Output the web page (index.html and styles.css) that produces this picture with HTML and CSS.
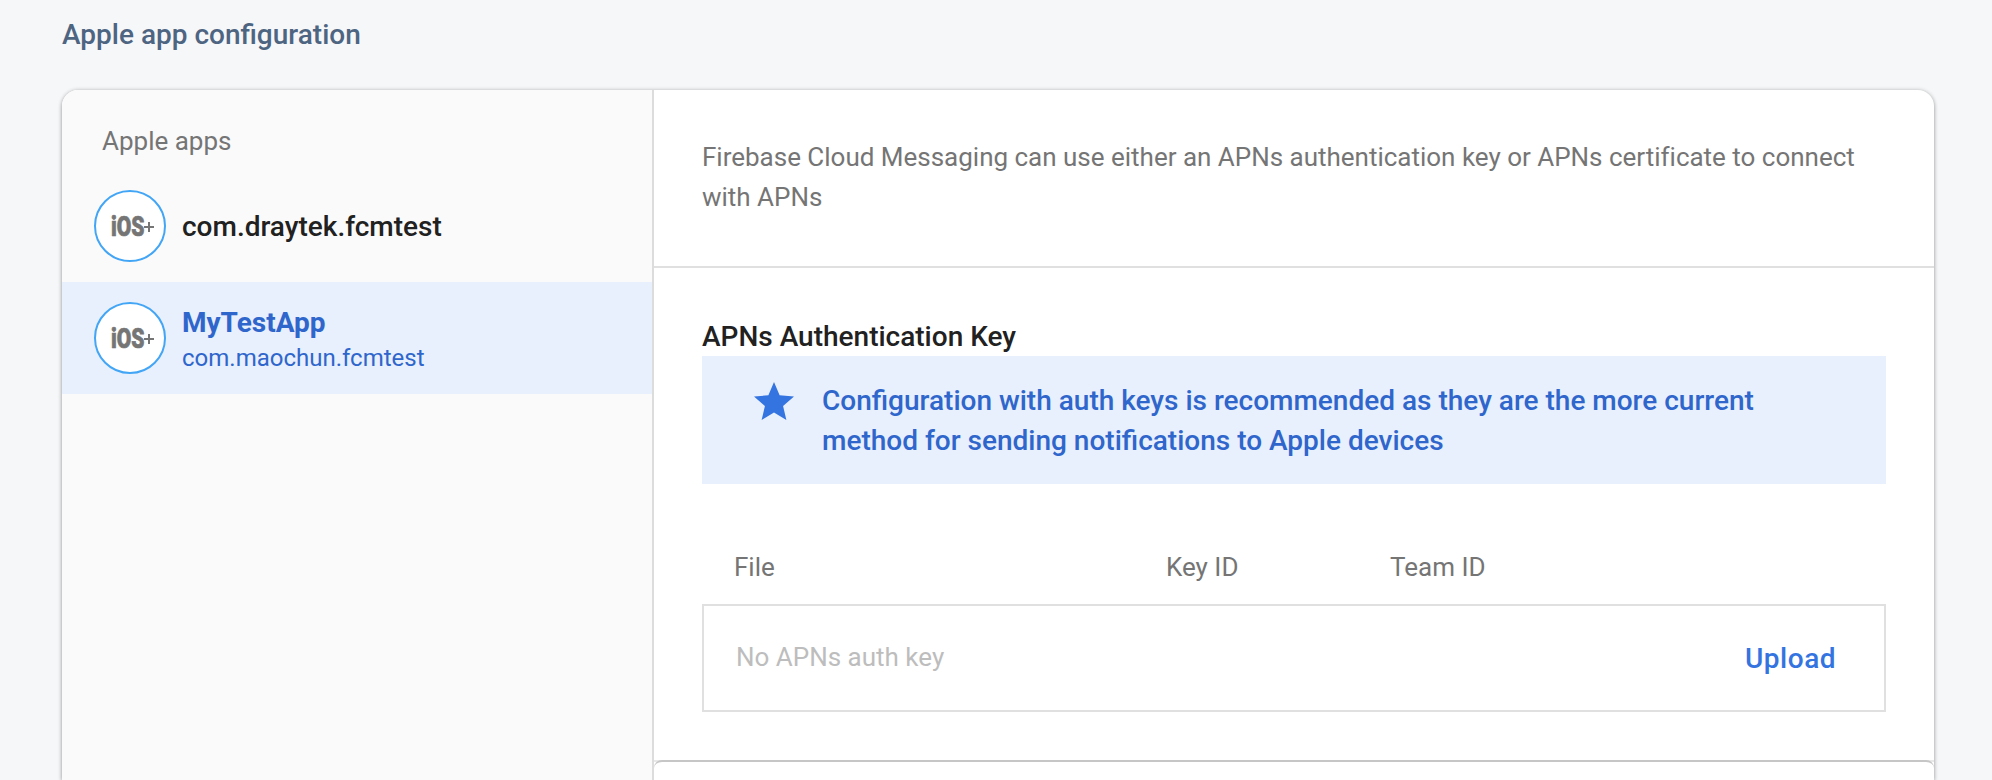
FILE: index.html
```html
<!DOCTYPE html>
<html lang="en">
<head>
<meta charset="utf-8">
<title>Apple app configuration</title>
<link rel="stylesheet" href="styles.css">
</head>
<body>
<main class="page">
  <h2 class="page-title">Apple app configuration</h2>
  <section class="card">
    <nav class="sidebar">
      <div class="sidebar-label">Apple apps</div>
      <div class="app">
        <span class="app-icon">
          <svg width="68" height="68" viewBox="0 0 68 68">
            <text class="ios-letters" x="15" y="44" textLength="33.5" lengthAdjust="spacingAndGlyphs">iOS</text>
            <path class="ios-plus" d="M48 35h10M53 30v10"/>
          </svg>
        </span>
        <div class="app-text"><div class="app-name">com.draytek.fcmtest</div></div>
      </div>
      <div class="app app-selected">
        <span class="app-icon">
          <svg width="68" height="68" viewBox="0 0 68 68">
            <text class="ios-letters" x="15" y="44" textLength="33.5" lengthAdjust="spacingAndGlyphs">iOS</text>
            <path class="ios-plus" d="M48 35h10M53 30v10"/>
          </svg>
        </span>
        <div class="app-text">
          <div class="app-name">MyTestApp</div>
          <div class="app-id">com.maochun.fcmtest</div>
        </div>
      </div>
    </nav>
    <div class="content">
      <p class="intro">Firebase Cloud Messaging can use either an APNs authentication key or APNs certificate to connect with APNs</p>
      <div class="auth">
        <h3 class="auth-title">APNs Authentication Key</h3>
        <div class="notice">
          <svg class="star" width="48" height="48" viewBox="0 0 24 24"><path d="M12 17.27L18.18 21l-1.64-7.03L22 9.24l-7.19-.61L12 2 9.19 8.63 2 9.24l5.46 4.73L5.82 21z"/></svg>
          <p class="notice-text">Configuration with auth keys is recommended as they are the more current method for sending notifications to Apple devices</p>
        </div>
        <div class="table-head"><span>File</span><span>Key ID</span><span>Team ID</span></div>
        <div class="table-row"><span class="empty">No APNs auth key</span><a class="upload">Upload</a></div>
      </div>
      <div class="next-card"></div>
    </div>
  </section>
</main>
</body>
</html>
```

FILE: styles.css
```css
* { box-sizing: border-box; }
body {
  margin: 0;
  background: #f6f7f9;
  font-family: Roboto, "Liberation Sans", sans-serif;
  font-size: 26px;
  line-height: 40px;
  color: #757575;
}
h2, h3, p { margin: 0; }
.page { height: 780px; padding: 15px 58px 0 62px; overflow: hidden; }
.page-title {
  font-size: 28px;
  font-weight: 500;
  line-height: 40px;
  color: #4e6582;
}
.card {
  display: flex;
  height: 690px;
  margin-top: 35px;
  border-radius: 16px 16px 0 0;
  overflow: hidden;
  background: #fff;
  box-shadow: 0 2px 4px rgba(0, 0, 0, .26), 0 0 4px rgba(0, 0, 0, .18);
}
.sidebar {
  width: 592px;
  flex: none;
  background: #fafafa;
  border-right: 2px solid #dcdcdc;
}
.sidebar-label { padding: 31px 40px 9px; }
.app {
  display: flex;
  align-items: center;
  height: 112px;
  padding: 0 32px;
  gap: 16px;
}
.app-icon {
  display: flex;
  width: 72px;
  height: 72px;
  border: 2px solid #42a5f5;
  border-radius: 50%;
  background: #fff;
}
.ios-letters {
  font: 900 28px Roboto, sans-serif;
  fill: #757575;
  stroke: #757575;
  stroke-width: .7;
}
.ios-plus { stroke: #757575; stroke-width: 2; fill: none; }
.app-name {
  padding-top: 2px;
  font-size: 28px;
  font-weight: 500;
  line-height: 40px;
  color: #212121;
}
.app-selected { background: #e8effd; }
.app-selected .app-name { padding: 2px 0 1px; font-weight: 700; line-height: 36px; color: #2f66cc; }
.app-id { font-size: 24px; line-height: 32px; color: #2f66cc; }
.content { flex: 1; display: flex; flex-direction: column; }
.intro {
  flex: none;
  height: 178px;
  padding: 47px 48px 0;
  border-bottom: 2px solid #e0e0e0;
  letter-spacing: -.01px;
}
.auth {
  flex: none;
  height: 494px;
  padding: 49px 48px 0;
  border-bottom: 2px solid #e8e8e8;
}
.auth-title {
  font-size: 28px;
  font-weight: 500;
  line-height: 39px;
  color: #212121;
}
.notice {
  display: flex;
  gap: 24px;
  height: 128px;
  padding: 24px 48px;
  background: #e8effd;
}
.star { flex: none; margin-top: -2px; fill: #3474e0; }
.notice-text { padding-top: 1px; font-size: 28px; font-weight: 500; color: #2f66cc; }
.table-head {
  display: grid;
  grid-template-columns: 432px 224px 1fr;
  margin-top: 63px;
  padding-left: 32px;
}
.table-row {
  display: flex;
  justify-content: space-between;
  align-items: center;
  height: 108px;
  margin-top: 17px;
  padding: 0 48px 0 32px;
  border: 2px solid #e0e0e0;
}
.empty { padding-bottom: 2px; color: #bdbdbd; }
.upload { padding-top: 2px; font-size: 28px; font-weight: 500; letter-spacing: .5px; color: #3474e0; }
.next-card {
  flex: 1;
  margin-top: -2px;
  border-top: 2px solid #c6c6c6;
  border-radius: 8px 8px 0 0;
}
```
